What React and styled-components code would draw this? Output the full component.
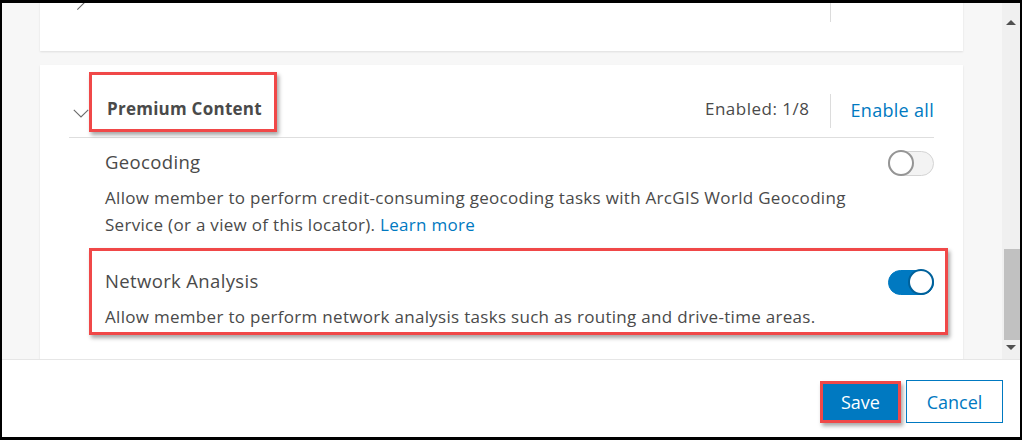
import React from "react";
import styled, { createGlobalStyle } from "styled-components";

const GlobalStyle = createGlobalStyle`
  html, body {
    margin: 0;
    padding: 0;
    background: #000;
  }
  body {
    font-family: "Open Sans", "Noto Sans", Arial, sans-serif;
    color: #4a4a4a;
  }
`;

const Chevron = ({ collapsed }) => (
  <ChevronIcon collapsed={collapsed} width="16" height="9" viewBox="0 0 16 9">
    <path d="M0.8 0.8 L8 8 L15.2 0.8" fill="none" stroke="#6b6b6b" strokeWidth="1.1" />
  </ChevronIcon>
);

const Switch = ({ on }) => (
  <SwitchTrack on={on ? 1 : 0}>
    <SwitchKnob on={on ? 1 : 0} />
  </SwitchTrack>
);

const App = () => {
  return (
    <>
      <GlobalStyle />
      <Frame>
        <Body>
          <ScrollArea>
            <Card collapsed>
              <Header>
                <Chevron collapsed />
                <Title>Sharing</Title>
                <Spacer />
                <Count>Enabled: 2/2</Count>
                <Divider tall />
                <EnableAll style={{ visibility: "hidden" }}>Enable all</EnableAll>
              </Header>
            </Card>
            <Card>
              <Header bordered>
                <Chevron />
                <Title highlighted>Premium Content</Title>
                <Spacer />
                <Count>Enabled: 1/8</Count>
                <Divider />
                <EnableAll>Enable all</EnableAll>
              </Header>
              <Items>
                <Item>
                  <ItemTop>
                    <ItemTitle>Geocoding</ItemTitle>
                    <Switch />
                  </ItemTop>
                  <ItemText>
                    Allow member to perform credit-consuming geocoding tasks with ArcGIS World Geocoding
                    Service (or a view of this locator). <Link>Learn more</Link>
                  </ItemText>
                </Item>
                <Item highlighted>
                  <ItemTop>
                    <ItemTitle>Network Analysis</ItemTitle>
                    <Switch on />
                  </ItemTop>
                  <ItemText>
                    Allow member to perform network analysis tasks such as routing and drive-time areas.
                  </ItemText>
                </Item>
              </Items>
            </Card>
          </ScrollArea>
          <Scrollbar>
            <ScrollButton>
              <Arrow />
            </ScrollButton>
            <Track>
              <Thumb />
            </Track>
            <ScrollButton>
              <Arrow down />
            </ScrollButton>
          </Scrollbar>
        </Body>
        <Footer>
          <SaveButton>Save</SaveButton>
          <CancelButton>Cancel</CancelButton>
        </Footer>
      </Frame>
    </>
  );
};

const Frame = styled.div`
  width: 1022px;
  height: 440px;
  box-sizing: border-box;
  border: 2px solid #000;
  border-top-width: 3px;
  border-bottom-width: 3px;
  background: #fff;
  display: flex;
  flex-direction: column;
  overflow: hidden;
`;

const Body = styled.div`
  height: 356px;
  display: flex;
  background: #f7f7f7;
  flex-shrink: 0;
`;

const ScrollArea = styled.div`
  flex: 1;
  overflow: hidden;
  padding: 0 39px 0 38px;
`;

const Card = styled.div`
  background: #fff;
  box-shadow: 0 1px 2px rgba(0, 0, 0, 0.1);
  padding: 0 29px ${(p) => (p.collapsed ? "34px" : "40px")};
  margin-top: ${(p) => (p.collapsed ? "-58px" : "14px")};
`;

const Header = styled.div`
  display: flex;
  align-items: center;
  height: 34px;
  padding: 29px 0 9px;
  border-bottom: ${(p) => (p.bordered ? "1px solid #dedede" : "none")};
`;

const ChevronIcon = styled.svg`
  margin-left: 4px;
  margin-top: 4px;
  flex-shrink: 0;
  transform: ${(p) => (p.collapsed ? "rotate(-90deg) translateX(-9px)" : "none")};
`;

const Title = styled.span`
  position: relative;
  margin-left: 18px;
  margin-top: -4px;
  font-size: 17px;
  font-weight: 700;
  letter-spacing: 0.25px;
  color: #4a4a4a;
  line-height: 24px;

  &::after {
    content: "";
    display: ${(p) => (p.highlighted ? "block" : "none")};
    position: absolute;
    top: -25px;
    bottom: -11px;
    left: -18px;
    right: -15px;
    border: 3px solid #f04848;
    box-shadow: 2px 3px 4px rgba(0, 0, 0, 0.35);
    pointer-events: none;
  }
`;

const Spacer = styled.div`
  flex: 1;
`;

const Count = styled.span`
  font-size: 17px;
  letter-spacing: 0.5px;
  color: #4a4a4a;
  margin-top: -5px;
`;

const Divider = styled.div`
  width: 1px;
  height: ${(p) => (p.tall ? "62px" : "34px")};
  flex-shrink: 0;
  background: #dcdcdc;
  margin: 0 20px;
`;

const EnableAll = styled.span`
  font-size: 18px;
  letter-spacing: 0.3px;
  color: #0079c1;
  margin-top: -2px;
`;

const Items = styled.div`
  display: flex;
  flex-direction: column;
  gap: 31px;
  padding: 12px 0 0 36px;
`;

const Item = styled.div`
  position: relative;

  &::before {
    content: "";
    display: ${(p) => (p.highlighted ? "block" : "none")};
    position: absolute;
    top: -21px;
    bottom: -5px;
    left: -16px;
    right: -14px;
    border: 3px solid #f04848;
    box-shadow: 2px 3px 4px rgba(0, 0, 0, 0.35);
    pointer-events: none;
  }
`;

const ItemTop = styled.div`
  display: flex;
  align-items: center;
  justify-content: space-between;
  height: 26px;
`;

const ItemTitle = styled.span`
  font-size: 18.5px;
  letter-spacing: 0.35px;
  color: #4a4a4a;
  margin-top: -4px;
`;

const ItemText = styled.p`
  margin: 8px 0 0;
  font-size: 17px;
  letter-spacing: 0.3px;
  line-height: 27px;
  color: #4a4a4a;
  max-width: 790px;
`;

const Link = styled.span`
  color: #0079c1;
`;

const SwitchTrack = styled.div`
  width: 46px;
  height: 25px;
  box-sizing: border-box;
  border-radius: 13px;
  display: flex;
  align-items: center;
  justify-content: ${(p) => (p.on ? "flex-end" : "flex-start")};
  background: ${(p) => (p.on ? "#0079c1" : "#f3f3f3")};
  border: 1px solid ${(p) => (p.on ? "#0079c1" : "#d4d4d4")};
`;

const SwitchKnob = styled.div`
  width: 26px;
  height: 26px;
  box-sizing: border-box;
  border-radius: 50%;
  background: #fff;
  margin: 0 -1px;
  border: 2.5px solid ${(p) => (p.on ? "#00619b" : "#959595")};
`;

const Scrollbar = styled.div`
  width: 18px;
  background: #f0f0f0;
  display: flex;
  flex-direction: column;
`;

const ScrollButton = styled.div`
  height: 17px;
  display: flex;
  justify-content: center;
`;

const Arrow = styled.div`
  width: 0;
  height: 0;
  border-left: 5px solid transparent;
  border-right: 5px solid transparent;
  ${(p) =>
    p.down
      ? "border-top: 5px solid #505050; margin-top: 3px;"
      : "border-bottom: 5px solid #505050; margin-top: 17px;"}
`;

const Track = styled.div`
  flex: 1;
  display: flex;
  flex-direction: column;
  justify-content: flex-end;
  padding: 0 0 2px 2px;
`;

const Thumb = styled.div`
  width: 16px;
  height: 91px;
  background: #c1c1c1;
`;

const Footer = styled.div`
  flex: 1;
  border-top: 1px solid #e6e6e6;
  display: flex;
  justify-content: flex-end;
  align-items: flex-start;
  padding: 20px 17px 0 0;
`;

const SaveButton = styled.button`
  width: 81px;
  height: 42px;
  margin-top: 1px;
  background: #0079c1;
  border: 3px solid #f04848;
  box-shadow: 2px 3px 4px rgba(0, 0, 0, 0.35);
  color: #fff;
  font-family: "Open Sans", Arial, sans-serif;
  font-size: 18px;
  padding: 0;
`;

const CancelButton = styled.button`
  width: 97px;
  height: 43px;
  margin-left: 5px;
  background: #fff;
  border: 1px solid #0079c1;
  color: #0079c1;
  font-family: "Open Sans", Arial, sans-serif;
  font-size: 18px;
  padding: 0;
`;

export default App;
